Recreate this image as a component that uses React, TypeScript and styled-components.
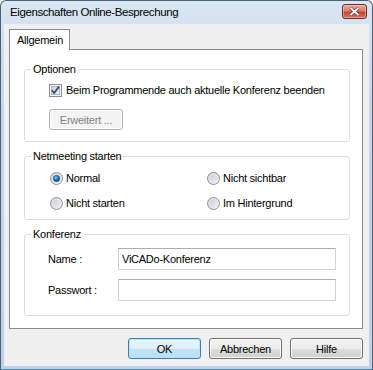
import styled, { createGlobalStyle } from "styled-components";
import { useState } from "react";

const GlobalStyle = createGlobalStyle`
  html, body {
    margin: 0;
    padding: 0;
    background: #ffffff;
  }
  body {
    font-family: "Liberation Sans", Arial, sans-serif;
    font-size: 11px;
    letter-spacing: -0.25px;
    color: #000;
  }
`;

// fenster rahmen
const Window = styled.div`
  width: 373px;
  height: 370px;
  box-sizing: border-box;
  display: flex;
  flex-direction: column;
  background: linear-gradient(#d9e6f3, #c3d6ec 30%, #bdd1e9);
  border: 1px solid #4d5f74;
  border-bottom-color: #3a8fb0;
  border-radius: 6px 6px 0 0;
  padding: 0 3px 3px;
`;

const TitleBar = styled.div`
  height: 23px;
  display: flex;
  justify-content: space-between;
  padding: 0 2px 0 6px;
`;

const Title = styled.span`
  font-size: 11.5px;
  letter-spacing: -0.4px;
  line-height: 23px;
  color: #000;
`;

const CloseButton = styled.div`
  width: 25px;
  height: 15px;
  margin-top: 3px;
  box-sizing: border-box;
  border: 1px solid #6b2b20;
  border-radius: 3px;
  background: linear-gradient(#e8a795, #d7826c 45%, #c2492f 55%, #d4765c);
  box-shadow: inset 0 0 0 1px rgba(255, 255, 255, 0.35);
  display: flex;
  align-items: center;
  justify-content: center;
`;

const Client = styled.div`
  flex: 1;
  background: #f0f0f0;
  padding: 5px 6px 0 5px;
  display: flex;
  flex-direction: column;
`;

const TabStrip = styled.div`
  display: flex;
  height: 20px;
`;

const Tab = styled.div`
  width: 61px;
  box-sizing: border-box;
  height: 21px;
  border: 1px solid #898c95;
  border-bottom: none;
  background: #fff;
  position: relative;
  z-index: 1;
  padding-left: 7px;
  line-height: 20px;
`;

const Panel = styled.div`
  background: #fff;
  border: 1px solid #898c95;
  padding: 13px 12px 12px 14px;
  display: flex;
  flex-direction: column;
  gap: 8px;
`;

const Group = styled.fieldset`
  margin: 0;
  padding: 0;
  min-inline-size: 0;
  border: 1px solid #d5dfe5;
  border-radius: 3px;
`;

const Legend = styled.legend`
  margin-left: 6px;
  padding: 0 2px;
  line-height: 13px;
  font-size: 11px;
`;

const GroupBody = styled.div<{ $pad: string }>`
  padding: ${(p) => p.$pad};
  display: flex;
  flex-direction: column;
`;

const CheckRow = styled.label`
  display: flex;
  align-items: center;
  gap: 4px;
  height: 16px;
`;

const RadioGrid = styled.div`
  display: grid;
  grid-template-columns: 157px 1fr;
  grid-auto-rows: 16px;
  row-gap: 9px;
`;

const RadioRow = styled.label`
  display: flex;
  align-items: center;
  gap: 3px;
`;

const FieldGrid = styled.div`
  display: grid;
  grid-template-columns: 70px 1fr;
  grid-auto-rows: 22px;
  row-gap: 9px;
  align-items: center;
`;

const TextField = styled.input`
  height: 22px;
  box-sizing: border-box;
  border: 1px solid #cfd3d8;
  border-top-color: #abadb3;
  padding: 0 3px;
  font-family: "Liberation Sans", Arial, sans-serif;
  font-size: 11px;
  letter-spacing: -0.25px;
  color: #000;
  outline: none;
`;

const PushButton = styled.button<{ $default?: boolean }>`
  width: 73px;
  height: 21px;
  box-sizing: border-box;
  border-radius: 3px;
  font-family: "Liberation Sans", Arial, sans-serif;
  font-size: 11px;
  letter-spacing: -0.25px;
  padding: 0;
  color: #000;
  border: 1px solid ${(p) => (p.$default ? "#3c7fb1" : "#707070")};
  background: ${(p) =>
    p.$default
      ? "linear-gradient(#ebf6fc, #dcf0fb 50%, #c4e5f7 50%, #b9def3)"
      : "linear-gradient(#f3f3f3, #ebebeb 50%, #dddddd 50%, #cfcfcf)"};
  box-shadow: inset 0 0 0 1px ${(p) => (p.$default ? "#b9e3f8" : "#fcfcfc")};
  &:disabled {
    width: 74px;
    border-color: #adb2b5;
    background: #f4f4f4;
    box-shadow: inset 0 0 0 1px #fcfcfc;
    color: #838383;
  }
`;

const ButtonRow = styled.div`
  display: flex;
  justify-content: flex-end;
  gap: 8px;
  margin-top: 9px;
`;

const GroupSpacer = styled.div`
  height: 11px;
`;

function CheckBox({ checked }: { checked: boolean }) {
  return (
    <svg width="13" height="13" viewBox="0 0 13 13">
      <defs>
        <linearGradient id="cbg" x1="0" y1="0" x2="1" y2="1">
          <stop offset="0" stopColor="#cbcfd5" />
          <stop offset="1" stopColor="#f6f6f6" />
        </linearGradient>
      </defs>
      <rect x="0.5" y="0.5" width="12" height="12" fill="#f4f4f4" stroke="#8e8f8f" />
      <rect x="2.5" y="2.5" width="8" height="8" fill="url(#cbg)" stroke="#b2b6bb" />
      {checked && (
        <path d="M3 6.2 L5.2 9 L10 2.6" fill="none" stroke="#2b4d8c" strokeWidth="1.8" />
      )}
    </svg>
  );
}

function Radio({ checked }: { checked: boolean }) {
  return (
    <svg width="13" height="13" viewBox="0 0 13 13">
      <defs>
        <linearGradient id="rbg" x1="0" y1="0" x2="1" y2="1">
          <stop offset="0" stopColor="#c4c6ca" />
          <stop offset="1" stopColor="#f7f7f7" />
        </linearGradient>
        <radialGradient id="rdot" cx="0.4" cy="0.35" r="0.7">
          <stop offset="0" stopColor="#8fd3f5" />
          <stop offset="0.5" stopColor="#1b7cc4" />
          <stop offset="1" stopColor="#0d3a6c" />
        </radialGradient>
      </defs>
      <circle cx="6.5" cy="6.5" r="6" fill="url(#rbg)" stroke="#8f9296" />
      <circle cx="6.5" cy="6.5" r="4.5" fill="none" stroke="#e9e9ea" />
      {checked && <circle cx="6.5" cy="6.5" r="3.2" fill="url(#rdot)" stroke="#2c5a8c" strokeWidth="0.6" />}
    </svg>
  );
}

export default function App() {
  const [mode, setMode] = useState("normal");
  const [name, setName] = useState("ViCADo-Konferenz");
  const [pass, setPass] = useState("");

  const radios = [
    { id: "normal", label: "Normal" },
    { id: "hidden", label: "Nicht sichtbar" },
    { id: "none", label: "Nicht starten" },
    { id: "bg", label: "Im Hintergrund" },
  ];

  return (
    <>
      <GlobalStyle />
      <Window>
        <TitleBar>
          <Title>Eigenschaften Online-Besprechung</Title>
          <CloseButton>
            <svg width="11" height="9" viewBox="0 0 11 9">
              <path d="M1.5 1 L9.5 8 M9.5 1 L1.5 8" stroke="#5a1d12" strokeWidth="3.2" />
              <path d="M1.5 1 L9.5 8 M9.5 1 L1.5 8" stroke="#fff" strokeWidth="2" />
            </svg>
          </CloseButton>
        </TitleBar>
        <Client>
          <TabStrip>
            <Tab>Allgemein</Tab>
          </TabStrip>
          <Panel>
            <Group>
              <Legend>Optionen</Legend>
              <GroupBody $pad="6px 0 11px 24px">
                <CheckRow>
                  <CheckBox checked />
                  <span>Beim Programmende auch aktuelle Konferenz beenden</span>
                </CheckRow>
                <GroupSpacer />
                <PushButton disabled>Erweitert ...</PushButton>
              </GroupBody>
            </Group>
            <Group>
              <Legend>Netmeeting starten</Legend>
              <GroupBody $pad="7px 0 8px 25px">
                <RadioGrid>
                  {radios.map((r) => (
                    <RadioRow key={r.id} onClick={() => setMode(r.id)}>
                      <Radio checked={mode === r.id} />
                      <span>{r.label}</span>
                    </RadioRow>
                  ))}
                </RadioGrid>
              </GroupBody>
            </Group>
            <Group>
              <Legend>Konferenz</Legend>
              <GroupBody $pad="7px 13px 14px 23px">
                <FieldGrid>
                  <span>Name :</span>
                  <TextField value={name} onChange={(e) => setName(e.target.value)} />
                  <span>Passwort :</span>
                  <TextField type="password" value={pass} onChange={(e) => setPass(e.target.value)} />
                </FieldGrid>
              </GroupBody>
            </Group>
          </Panel>
          <ButtonRow>
            <PushButton $default>OK</PushButton>
            <PushButton>Abbrechen</PushButton>
            <PushButton>Hilfe</PushButton>
          </ButtonRow>
        </Client>
      </Window>
    </>
  );
}
